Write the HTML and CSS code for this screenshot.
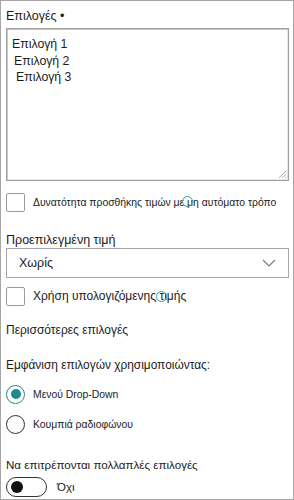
FILE: index.html
```html
<!DOCTYPE html>
<html lang="el">
<head>
<meta charset="utf-8">
<link rel="stylesheet" href="styles.css">
</head>
<body>
<div class="panel">
  <div class="label first">Επιλογές •</div>
  <div class="textarea">
    <div class="opt">Επιλογή 1</div>
    <div class="opt ind1">Επιλογή 2</div>
    <div class="opt ind2">Επιλογή 3</div>
    <svg class="grip" width="10" height="10" viewBox="0 0 10 10"><path d="M9 2L2 9M9 5L5 9M9 8L8 9" stroke="#b0b0b0" stroke-width="1" fill="none"/></svg>
  </div>
  <div class="check-row row1">
    <span class="box"></span>
    <span class="small-text">Δυνατότητα προσθήκης τιμών με μη αυτόματο τρόπο</span>
    <span class="ring ring1"></span>
  </div>
  <div class="label default-label">Προεπιλεγμένη τιμή</div>
  <div class="select">
    <span>Χωρίς</span>
    <svg width="14" height="8" viewBox="0 0 14 8"><path d="M1 1L7 7L13 1" stroke="#777" stroke-width="1.1" fill="none"/></svg>
  </div>
  <div class="check-row row2">
    <span class="box"></span>
    <span class="mid-text">Χρήση υπολογιζόμενης τιμής</span>
    <span class="ring ring2"></span>
  </div>
  <div class="label more">Περισσότερες επιλογές</div>
  <div class="label show">Εμφάνιση επιλογών χρησιμοποιώντας:</div>
  <div class="radio-row r1">
    <span class="radio on"><span class="dot"></span></span>
    <span class="small-text">Μενού Drop-Down</span>
  </div>
  <div class="radio-row r2">
    <span class="radio"></span>
    <span class="small-text">Κουμπιά ραδιοφώνου</span>
  </div>
  <div class="label multi">Να επιτρέπονται πολλαπλές επιλογές</div>
  <div class="toggle-row">
    <span class="toggle"><span class="knob"></span></span>
    <span class="toggle-text">Όχι</span>
  </div>
</div>
</body>
</html>
```
FILE: styles.css
```css
* { box-sizing: border-box; }
html, body { margin: 0; padding: 0; background: #fff; }
body {
  font-family: "Liberation Sans", Arial, sans-serif;
  color: #1b1b1b;
}
.panel {
  width: 294px;
  height: 500px;
  border: 1px solid #a6a6a6;
  padding: 7px 4px 0 5px;
  display: flex;
  flex-direction: column;
}
.label {
  font-size: 12.5px;
  line-height: 16px;
  height: 16px;
  white-space: nowrap;
}
.textarea {
  position: relative;
  margin-top: 4px;
  height: 153px;
  border: 1px solid #a0a0a0;
  box-shadow: inset 1px 1px 0 #c8c8c8, inset -1px -1px 0 #e4e4e4;
  padding: 7px 0 0 5px;
}
.opt {
  font-size: 12.3px;
  line-height: 16.5px;
  height: 16.5px;
}
.ind1 { padding-left: 2px; }
.ind2 { padding-left: 4px; }
.grip {
  position: absolute;
  right: 1px;
  bottom: 1px;
}
.check-row {
  position: relative;
  display: flex;
  align-items: center;
  height: 18px;
  gap: 8px;
}
.row1 { margin-top: 12px; }
.row2 { margin-top: 9px; }
.box {
  width: 19px;
  height: 19px;
  flex: none;
  border: 1px solid #9a9a9a;
  border-radius: 2px;
  background: #fff;
}
.small-text {
  font-size: 10.4px;
  white-space: nowrap;
}
.mid-text {
  font-size: 12px;
  white-space: nowrap;
}
.ring {
  position: absolute;
  width: 11px;
  height: 11px;
  border: 1.5px solid #3f9ca3;
  border-radius: 50%;
  top: 3px;
}
.ring1 { left: 176px; }
.ring2 { left: 150px; top: 4px; }
.default-label { margin-top: 21px; }
.select {
  margin-top: 0;
  height: 30px;
  border: 1px solid #a6a6a6;
  display: flex;
  align-items: center;
  justify-content: space-between;
  padding: 0 12px 0 12px;
  font-size: 12.5px;
}
.more { margin-top: 17px; font-size: 12px; }
.show { margin-top: 19px; font-size: 11.9px; }
.radio-row {
  display: flex;
  align-items: center;
  gap: 8px;
  height: 18px;
}
.r1 { margin-top: 12px; }
.r2 { margin-top: 12px; }
.radio {
  width: 19px;
  height: 19px;
  flex: none;
  border: 1px solid #333;
  border-radius: 50%;
  display: flex;
  align-items: center;
  justify-content: center;
}
.radio.on { border-color: #1f8a8e; }
.dot {
  width: 10px;
  height: 10px;
  border-radius: 50%;
  background: #1f8a8e;
}
.multi { margin-top: 24px; font-size: 11.6px; }
.toggle-row {
  margin-top: 4px;
  display: flex;
  align-items: center;
  gap: 10px;
  height: 20px;
}
.toggle {
  width: 41px;
  height: 20px;
  border: 1px solid #333;
  border-radius: 10px;
  display: flex;
  align-items: center;
  padding-left: 4px;
}
.knob {
  width: 12px;
  height: 12px;
  border-radius: 50%;
  background: #111;
}
.toggle-text { font-size: 11.5px; }
```
